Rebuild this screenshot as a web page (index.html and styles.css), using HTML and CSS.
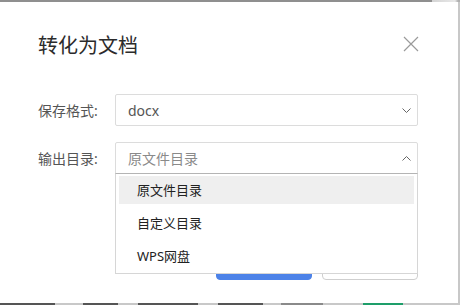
FILE: index.html
```html
<!DOCTYPE html>
<html lang="zh-CN">
<head>
  <meta charset="UTF-8" />
  <title>转化为文档</title>
  <link rel="stylesheet" href="styles.css">
</head>
<body>
  <div class="top-edge"></div>
  <div class="frame">
    <div class="dialog">
      <div class="header">
        <h1>转化为文档</h1>
        <svg class="close" width="16" height="16" viewBox="0 0 16 16">
          <path d="M1 1L15 15M15 1L1 15" stroke="#9a9a9a" stroke-width="1.2" fill="none"/>
        </svg>
      </div>

      <div class="row">
        <label>保存格式:</label>
        <div class="select">
          <span class="value">docx</span>
          <svg class="chevron" width="9" height="5" viewBox="0 0 9 5">
            <path d="M0.5 0.5L4.5 4.5L8.5 0.5" stroke="#666" stroke-width="1" fill="none"/>
          </svg>
        </div>
      </div>

      <div class="row">
        <label>输出目录:</label>
        <div class="select open">
          <span class="placeholder">原文件目录</span>
          <svg class="chevron" width="9" height="5" viewBox="0 0 9 5">
            <path d="M0.5 4.5L4.5 0.5L8.5 4.5" stroke="#666" stroke-width="1" fill="none"/>
          </svg>
          <div class="menu">
            <div class="item active">原文件目录</div>
            <div class="item">自定义目录</div>
            <div class="item">WPS网盘</div>
          </div>
        </div>
      </div>

      <div class="actions">
        <button class="btn primary">转换</button>
        <button class="btn">取消</button>
      </div>
    </div>
    <div class="right-edge"></div>
  </div>
  <div class="bottom-edge">
    <span class="dark" style="width: 55px"></span>
    <span class="gap" style="width: 28px"></span>
    <span class="dark" style="width: 35px"></span>
    <span class="gap" style="width: 20px"></span>
    <span class="dark" style="width: 60px"></span>
    <span class="gap" style="width: 20px"></span>
    <span class="dark" style="width: 45px"></span>
    <span class="gap" style="width: 18px"></span>
    <span class="mid" style="width: 42px"></span>
    <span class="gap" style="width: 40px"></span>
    <span class="green" style="width: 40px"></span>
    <span class="gap" style="width: 57px"></span>
  </div>
</body>
</html>
```

FILE: styles.css
```css
* {
  margin: 0;
  padding: 0;
  box-sizing: border-box;
  font-family: 'Noto Sans', 'Noto Sans CJK SC', sans-serif;
}
body {
  width: 460px;
  height: 305px;
  overflow: hidden;
  background: #fff;
  display: flex;
  flex-direction: column;
}
.top-edge {
  height: 2px;
  background: linear-gradient(to right, #8f8f8f 0, #8f8f8f 432px, #d4d4d4 432px, #e8e8e8 455px, #b0b0b0 458px);
}
.frame {
  flex: 1;
  display: flex;
}
.dialog {
  flex: 1;
  padding: 27px 40px 0 38px;
}
.right-edge {
  width: 2px;
  background: #c8c8c8;
}
.header {
  display: flex;
  justify-content: space-between;
  align-items: center;
  height: 30px;
}
.header h1 {
  font-size: 20px;
  font-weight: normal;
  color: #2b2b2b;
}
.close {
  margin-right: -1px;
}
.row {
  display: flex;
  align-items: center;
  margin-top: 35px;
}
.row + .row {
  margin-top: 16px;
}
.row label {
  width: 77px;
  font-size: 14px;
  color: #555;
}
.select {
  position: relative;
  flex: 1;
  height: 32px;
  border: 1px solid #dcdcdc;
  border-radius: 2px;
  display: flex;
  align-items: center;
  justify-content: space-between;
  padding: 0 6px 0 12px;
  font-size: 14px;
}
.select.open {
  border-radius: 2px 2px 0 0;
}
.value {
  color: #555;
}
.placeholder {
  color: #8a8a8a;
}
.menu {
  position: absolute;
  left: -1px;
  right: -1px;
  top: 30px;
  background: #fff;
  border: 1px solid #d6d6d6;
  border-top-color: #b4b4b4;
  padding: 2px 3px 3px;
  z-index: 2;
}
.item {
  height: 28px;
  line-height: 28px;
  padding-left: 18px;
  font-size: 13px;
  color: #222;
  margin-bottom: 5px;
}
.item:last-child {
  margin-bottom: 0;
}
.item.active {
  background: #efefef;
}
.actions {
  display: flex;
  justify-content: flex-end;
  gap: 10px;
  margin-top: 74px;
}
.btn {
  width: 96px;
  height: 32px;
  border: 1px solid #cfcfcf;
  border-radius: 4px;
  background: #fff;
  font-size: 14px;
  line-height: 20px;
  padding-top: 0;
  color: #333;
}
.btn.primary {
  background: #4c82e8;
  border-color: #4c82e8;
  color: #fff;
}
.bottom-edge {
  height: 2px;
  display: flex;
  background: #d0d0d0;
}
.bottom-edge span {
  display: block;
  height: 2px;
}
.bottom-edge .dark {
  background: #555;
}
.bottom-edge .mid {
  background: #8a8a8a;
}
.bottom-edge .gap {
  background: #c8c8c8;
}
.bottom-edge .green {
  background: #1e9e6a;
}
```
